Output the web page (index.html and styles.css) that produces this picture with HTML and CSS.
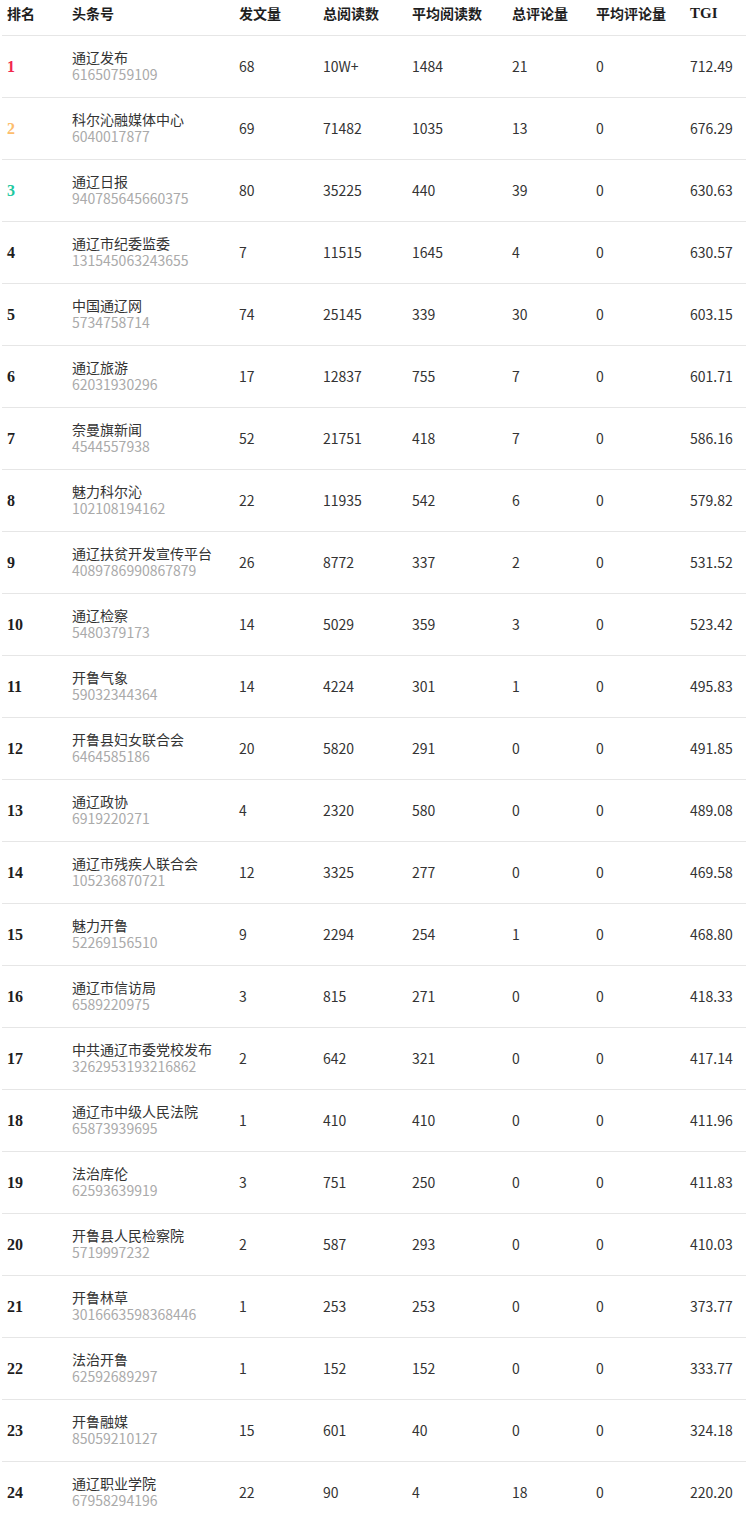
FILE: index.html
```html
<!DOCTYPE html>
<html lang="zh-CN">
<head>
<meta charset="utf-8">
<title>头条号排行</title>
<link rel="stylesheet" href="styles.css">
</head>
<body>
<div class="board">
  <div class="row head">
    <div class="cell">排名</div>
    <div class="cell">头条号</div>
    <div class="cell">发文量</div>
    <div class="cell">总阅读数</div>
    <div class="cell">平均阅读数</div>
    <div class="cell">总评论量</div>
    <div class="cell">平均评论量</div>
    <div class="cell tgi">TGI</div>
  </div>
  <div class="row"><div class="cell rank r1">1</div><div class="cell acct"><span class="name">通辽发布</span><span class="uid">61650759109</span></div><div class="cell">68</div><div class="cell">10W+</div><div class="cell">1484</div><div class="cell">21</div><div class="cell">0</div><div class="cell">712.49</div></div>
  <div class="row"><div class="cell rank r2">2</div><div class="cell acct"><span class="name">科尔沁融媒体中心</span><span class="uid">6040017877</span></div><div class="cell">69</div><div class="cell">71482</div><div class="cell">1035</div><div class="cell">13</div><div class="cell">0</div><div class="cell">676.29</div></div>
  <div class="row"><div class="cell rank r3">3</div><div class="cell acct"><span class="name">通辽日报</span><span class="uid">940785645660375</span></div><div class="cell">80</div><div class="cell">35225</div><div class="cell">440</div><div class="cell">39</div><div class="cell">0</div><div class="cell">630.63</div></div>
  <div class="row"><div class="cell rank">4</div><div class="cell acct"><span class="name">通辽市纪委监委</span><span class="uid">131545063243655</span></div><div class="cell">7</div><div class="cell">11515</div><div class="cell">1645</div><div class="cell">4</div><div class="cell">0</div><div class="cell">630.57</div></div>
  <div class="row"><div class="cell rank">5</div><div class="cell acct"><span class="name">中国通辽网</span><span class="uid">5734758714</span></div><div class="cell">74</div><div class="cell">25145</div><div class="cell">339</div><div class="cell">30</div><div class="cell">0</div><div class="cell">603.15</div></div>
  <div class="row"><div class="cell rank">6</div><div class="cell acct"><span class="name">通辽旅游</span><span class="uid">62031930296</span></div><div class="cell">17</div><div class="cell">12837</div><div class="cell">755</div><div class="cell">7</div><div class="cell">0</div><div class="cell">601.71</div></div>
  <div class="row"><div class="cell rank">7</div><div class="cell acct"><span class="name">奈曼旗新闻</span><span class="uid">4544557938</span></div><div class="cell">52</div><div class="cell">21751</div><div class="cell">418</div><div class="cell">7</div><div class="cell">0</div><div class="cell">586.16</div></div>
  <div class="row"><div class="cell rank">8</div><div class="cell acct"><span class="name">魅力科尔沁</span><span class="uid">102108194162</span></div><div class="cell">22</div><div class="cell">11935</div><div class="cell">542</div><div class="cell">6</div><div class="cell">0</div><div class="cell">579.82</div></div>
  <div class="row"><div class="cell rank">9</div><div class="cell acct"><span class="name">通辽扶贫开发宣传平台</span><span class="uid">4089786990867879</span></div><div class="cell">26</div><div class="cell">8772</div><div class="cell">337</div><div class="cell">2</div><div class="cell">0</div><div class="cell">531.52</div></div>
  <div class="row"><div class="cell rank">10</div><div class="cell acct"><span class="name">通辽检察</span><span class="uid">5480379173</span></div><div class="cell">14</div><div class="cell">5029</div><div class="cell">359</div><div class="cell">3</div><div class="cell">0</div><div class="cell">523.42</div></div>
  <div class="row"><div class="cell rank">11</div><div class="cell acct"><span class="name">开鲁气象</span><span class="uid">59032344364</span></div><div class="cell">14</div><div class="cell">4224</div><div class="cell">301</div><div class="cell">1</div><div class="cell">0</div><div class="cell">495.83</div></div>
  <div class="row"><div class="cell rank">12</div><div class="cell acct"><span class="name">开鲁县妇女联合会</span><span class="uid">6464585186</span></div><div class="cell">20</div><div class="cell">5820</div><div class="cell">291</div><div class="cell">0</div><div class="cell">0</div><div class="cell">491.85</div></div>
  <div class="row"><div class="cell rank">13</div><div class="cell acct"><span class="name">通辽政协</span><span class="uid">6919220271</span></div><div class="cell">4</div><div class="cell">2320</div><div class="cell">580</div><div class="cell">0</div><div class="cell">0</div><div class="cell">489.08</div></div>
  <div class="row"><div class="cell rank">14</div><div class="cell acct"><span class="name">通辽市残疾人联合会</span><span class="uid">105236870721</span></div><div class="cell">12</div><div class="cell">3325</div><div class="cell">277</div><div class="cell">0</div><div class="cell">0</div><div class="cell">469.58</div></div>
  <div class="row"><div class="cell rank">15</div><div class="cell acct"><span class="name">魅力开鲁</span><span class="uid">52269156510</span></div><div class="cell">9</div><div class="cell">2294</div><div class="cell">254</div><div class="cell">1</div><div class="cell">0</div><div class="cell">468.80</div></div>
  <div class="row"><div class="cell rank">16</div><div class="cell acct"><span class="name">通辽市信访局</span><span class="uid">6589220975</span></div><div class="cell">3</div><div class="cell">815</div><div class="cell">271</div><div class="cell">0</div><div class="cell">0</div><div class="cell">418.33</div></div>
  <div class="row"><div class="cell rank">17</div><div class="cell acct"><span class="name">中共通辽市委党校发布</span><span class="uid">3262953193216862</span></div><div class="cell">2</div><div class="cell">642</div><div class="cell">321</div><div class="cell">0</div><div class="cell">0</div><div class="cell">417.14</div></div>
  <div class="row"><div class="cell rank">18</div><div class="cell acct"><span class="name">通辽市中级人民法院</span><span class="uid">65873939695</span></div><div class="cell">1</div><div class="cell">410</div><div class="cell">410</div><div class="cell">0</div><div class="cell">0</div><div class="cell">411.96</div></div>
  <div class="row"><div class="cell rank">19</div><div class="cell acct"><span class="name">法治库伦</span><span class="uid">62593639919</span></div><div class="cell">3</div><div class="cell">751</div><div class="cell">250</div><div class="cell">0</div><div class="cell">0</div><div class="cell">411.83</div></div>
  <div class="row"><div class="cell rank">20</div><div class="cell acct"><span class="name">开鲁县人民检察院</span><span class="uid">5719997232</span></div><div class="cell">2</div><div class="cell">587</div><div class="cell">293</div><div class="cell">0</div><div class="cell">0</div><div class="cell">410.03</div></div>
  <div class="row"><div class="cell rank">21</div><div class="cell acct"><span class="name">开鲁林草</span><span class="uid">3016663598368446</span></div><div class="cell">1</div><div class="cell">253</div><div class="cell">253</div><div class="cell">0</div><div class="cell">0</div><div class="cell">373.77</div></div>
  <div class="row"><div class="cell rank">22</div><div class="cell acct"><span class="name">法治开鲁</span><span class="uid">62592689297</span></div><div class="cell">1</div><div class="cell">152</div><div class="cell">152</div><div class="cell">0</div><div class="cell">0</div><div class="cell">333.77</div></div>
  <div class="row"><div class="cell rank">23</div><div class="cell acct"><span class="name">开鲁融媒</span><span class="uid">85059210127</span></div><div class="cell">15</div><div class="cell">601</div><div class="cell">40</div><div class="cell">0</div><div class="cell">0</div><div class="cell">324.18</div></div>
  <div class="row"><div class="cell rank">24</div><div class="cell acct"><span class="name">通辽职业学院</span><span class="uid">67958294196</span></div><div class="cell">22</div><div class="cell">90</div><div class="cell">4</div><div class="cell">18</div><div class="cell">0</div><div class="cell">220.20</div></div>
</div>
</body>
</html>
```

FILE: styles.css
```css
html, body {
  margin: 0;
  padding: 0;
  background: #fff;
}

body {
  font-family: "Noto Sans CJK SC", "Noto Sans", sans-serif;
  font-size: 14px;
  color: #333;
}

.board {
  margin-left: 2px;
  width: 744px;
}

.row {
  display: grid;
  grid-template-columns: 65px 167px 84px 89px 100px 84px 94px 61px;
  border-bottom: 1px solid #e6e6e6;
  height: 61px;
  align-items: center;
}

.row.head {
  height: 35px;
  align-items: start;
  font-weight: bold;
  color: #1e1e1e;
}

.head .cell {
  padding-top: 4px;
  line-height: 18px;
}

.cell {
  padding-left: 5px;
  white-space: nowrap;
  line-height: 17px;
}

.head .tgi {
  font-family: "Liberation Serif", "Noto Sans CJK SC", serif;
  font-size: 15px;
}

.rank {
  font-family: "Liberation Serif", "Noto Sans CJK SC", serif;
  font-weight: bold;
  font-size: 16px;
  color: #1e1e1e;
}

.rank.r1 { color: #f2274c; }
.rank.r2 { color: #fdbd6b; }
.rank.r3 { color: #1ec8a0; }

.acct {
  display: flex;
  flex-direction: column;
  margin-top: -1px;
}

.name {
  color: #333;
}

.uid {
  color: #aaa;
}
```
